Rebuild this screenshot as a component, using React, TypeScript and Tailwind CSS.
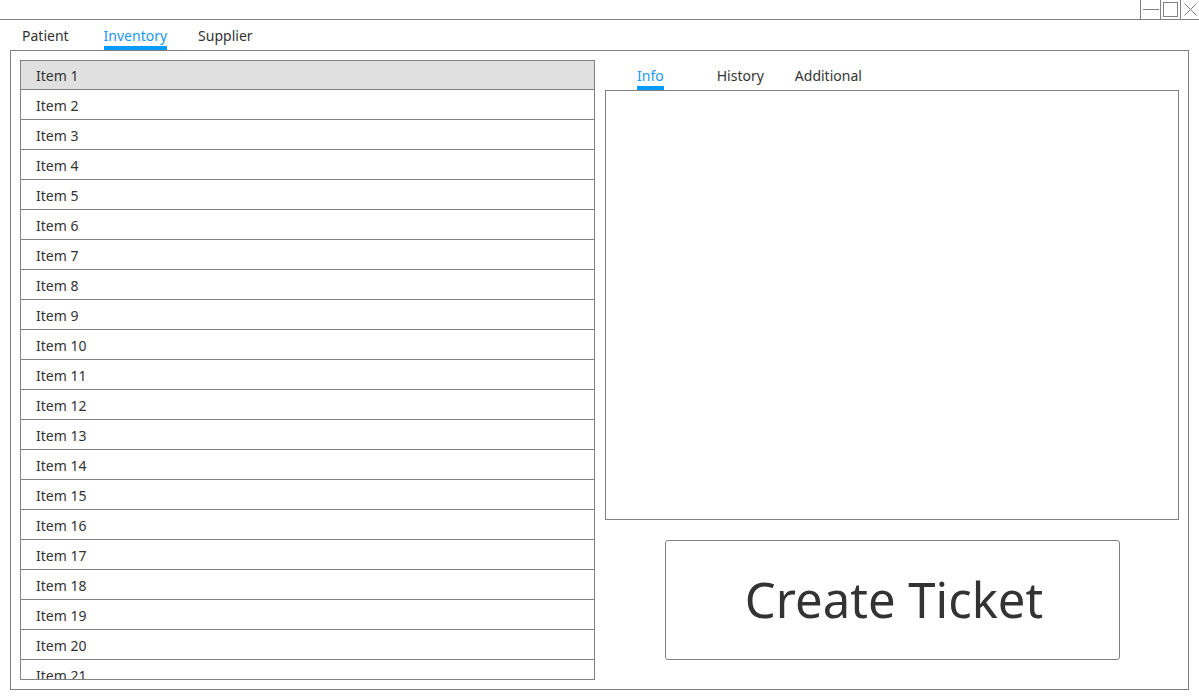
import { useState } from "react";

const items = Array.from({ length: 21 }, (_, i) => `Item ${i + 1}`);

export default function App() {
  const [selected, setSelected] = useState(0);

  return (
    <div className="flex h-[698px] w-[1199px] flex-col bg-white font-['Noto_Sans',sans-serif] text-[14px] text-[#333]">
      {/* title bar */}
      <div className="flex h-[20px] shrink-0 justify-end border-b border-[#808080]">
        <div className="flex h-[19px] w-[20px] items-center justify-center border-l border-[#808080]">
          <div className="h-px w-[16px] bg-[#808080]" />
        </div>
        <div className="flex h-[19px] w-[20px] items-center justify-center border-l border-[#808080]">
          <div className="h-[15px] w-[15px] border border-[#808080]" />
        </div>
        <div className="flex h-[19px] w-[19px] items-center justify-center border-l border-[#808080]">
          <svg width="13" height="13" viewBox="0 0 13 13" className="stroke-[#808080]">
            <path d="M0.5 0.5 L12.5 12.5 M12.5 0.5 L0.5 12.5" strokeWidth="1" />
          </svg>
        </div>
      </div>

      {/* main tabs */}
      <div className="flex h-[30px] shrink-0 items-end pl-[22px]">
        <div className="flex h-full flex-col justify-between pt-[7px]">
          <span className="leading-[18px]">Patient</span>
          <div className="h-[4px]" />
        </div>
        <div className="ml-[35px] flex h-full flex-col justify-between pt-[7px]">
          <span className="leading-[18px] text-[#1c97f5]">Inventory</span>
          <div className="h-[4px] bg-[#0a9bff]" />
        </div>
        <div className="ml-[31px] flex h-full flex-col justify-between pt-[7px]">
          <span className="leading-[18px]">Supplier</span>
          <div className="h-[4px]" />
        </div>
      </div>

      {/* content frame */}
      <div className="mx-[10px] mb-[8px] flex min-h-0 flex-1 gap-[10px] border border-[#808080] p-[9px]">
        {/* item list */}
        <div className="flex w-[575px] shrink-0 flex-col overflow-hidden border border-[#808080]">
          {items.map((it, i) => (
            <div
              key={it}
              onClick={() => setSelected(i)}
              className={`flex h-[30px] shrink-0 cursor-pointer items-center border-b border-[#808080] pl-[15px] ${
                i === 0 ? "-mt-px" : ""
              } ${selected === i ? "bg-[#e0e0e0]" : "bg-white"}`}
            >
              <span className={i === 0 ? "pt-px" : "pt-[2px]"}>{it}</span>
            </div>
          ))}
        </div>

        {/* detail column */}
        <div className="flex min-w-0 flex-1 flex-col">
          <div className="flex h-[30px] shrink-0 items-end pl-[32px]">
            <div className="flex h-full flex-col justify-between pt-[7px]">
              <span className="leading-[18px] text-[#1c97f5]">Info</span>
              <div className="h-[4px] bg-[#0a9bff]" />
            </div>
            <div className="ml-[53px] flex h-full flex-col justify-between pt-[7px]">
              <span className="leading-[18px]">History</span>
              <div className="h-[4px]" />
            </div>
            <div className="ml-[31px] flex h-full flex-col justify-between pt-[7px]">
              <span className="leading-[18px]">Additional</span>
              <div className="h-[4px]" />
            </div>
          </div>
          <div className="h-[430px] shrink-0 border border-[#808080]" />
          <div className="flex flex-1 items-start justify-center pt-[20px]">
            <button className="flex h-[120px] w-[455px] items-center justify-center rounded-[3px] border border-[#808080] bg-white pl-[4px] text-[49px] text-[#333]">
              Create Ticket
            </button>
          </div>
        </div>
      </div>
    </div>
  );
}
